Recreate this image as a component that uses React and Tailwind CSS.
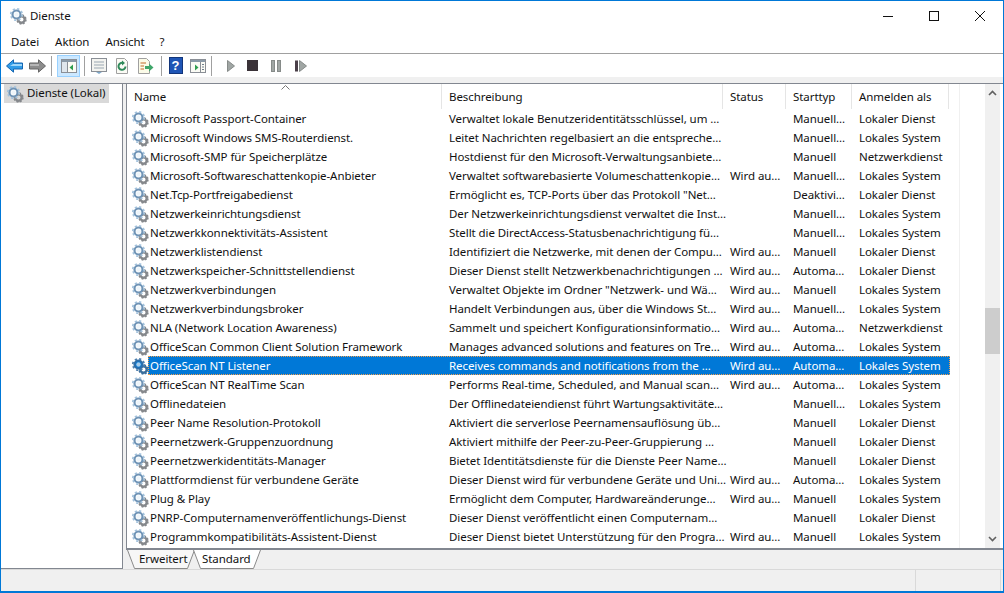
const services = [
  ['Microsoft Passport-Container', 'Verwaltet lokale Benutzeridentitätsschlüssel, um ...', '', 'Manuell...', 'Lokaler Dienst'],
  ['Microsoft Windows SMS-Routerdienst.', 'Leitet Nachrichten regelbasiert an die entspreche...', '', 'Manuell...', 'Lokales System'],
  ['Microsoft-SMP für Speicherplätze', 'Hostdienst für den Microsoft-Verwaltungsanbiete...', '', 'Manuell', 'Netzwerkdienst'],
  ['Microsoft-Softwareschattenkopie-Anbieter', 'Verwaltet softwarebasierte Volumeschattenkopie...', 'Wird au...', 'Manuell...', 'Lokales System'],
  ['Net.Tcp-Portfreigabedienst', 'Ermöglicht es, TCP-Ports über das Protokoll "Net...', '', 'Deaktivi...', 'Lokaler Dienst'],
  ['Netzwerkeinrichtungsdienst', 'Der Netzwerkeinrichtungsdienst verwaltet die Inst...', '', 'Manuell...', 'Lokales System'],
  ['Netzwerkkonnektivitäts-Assistent', 'Stellt die DirectAccess-Statusbenachrichtigung fü...', '', 'Manuell...', 'Lokales System'],
  ['Netzwerklistendienst', 'Identifiziert die Netzwerke, mit denen der Compu...', 'Wird au...', 'Manuell', 'Lokaler Dienst'],
  ['Netzwerkspeicher-Schnittstellendienst', 'Dieser Dienst stellt Netzwerkbenachrichtigungen ...', 'Wird au...', 'Automa...', 'Lokaler Dienst'],
  ['Netzwerkverbindungen', 'Verwaltet Objekte im Ordner "Netzwerk- und Wä...', 'Wird au...', 'Manuell', 'Lokales System'],
  ['Netzwerkverbindungsbroker', 'Handelt Verbindungen aus, über die Windows St...', 'Wird au...', 'Manuell...', 'Lokales System'],
  ['NLA (Network Location Awareness)', 'Sammelt und speichert Konfigurationsinformatio...', 'Wird au...', 'Automa...', 'Netzwerkdienst'],
  ['OfficeScan Common Client Solution Framework', 'Manages advanced solutions and features on Tre...', 'Wird au...', 'Automa...', 'Lokales System'],
  ['OfficeScan NT Listener', 'Receives commands and notifications from the ...', 'Wird au...', 'Automa...', 'Lokales System'],
  ['OfficeScan NT RealTime Scan', 'Performs Real-time, Scheduled, and Manual scan...', 'Wird au...', 'Automa...', 'Lokales System'],
  ['Offlinedateien', 'Der Offlinedateiendienst führt Wartungsaktivitäte...', '', 'Manuell...', 'Lokales System'],
  ['Peer Name Resolution-Protokoll', 'Aktiviert die serverlose Peernamensauflösung üb...', '', 'Manuell', 'Lokaler Dienst'],
  ['Peernetzwerk-Gruppenzuordnung', 'Aktiviert mithilfe der Peer-zu-Peer-Gruppierung ...', '', 'Manuell', 'Lokaler Dienst'],
  ['Peernetzwerkidentitäts-Manager', 'Bietet Identitätsdienste für die Dienste Peer Name...', '', 'Manuell', 'Lokaler Dienst'],
  ['Plattformdienst für verbundene Geräte', 'Dieser Dienst wird für verbundene Geräte und Uni...', 'Wird au...', 'Automa...', 'Lokales System'],
  ['Plug & Play', 'Ermöglicht dem Computer, Hardwareänderunge...', 'Wird au...', 'Manuell', 'Lokales System'],
  ['PNRP-Computernamenveröffentlichungs-Dienst', 'Dieser Dienst veröffentlicht einen Computernam...', '', 'Manuell', 'Lokaler Dienst'],
  ['Programmkompatibilitäts-Assistent-Dienst', 'Dieser Dienst bietet Unterstützung für den Progra...', 'Wird au...', 'Manuell', 'Lokales System'],
  ['', '', '', '', ''],
];

function Gear({ selected }) {
  const big = selected ? '#2f6ea8' : '#6f93b5';
  const small = selected ? '#3c6f9c' : '#85888c';
  return (
    <svg width="18" height="18" viewBox="0 0 18 18" className="shrink-0">
      <circle cx="12.5" cy="12.5" r="3.2" fill="none" stroke={small} strokeWidth="2.4" />
      <circle cx="12.5" cy="12.5" r="4.4" fill="none" stroke={small} strokeWidth="1.6" strokeDasharray="2 1.45" />
      <circle cx="7.5" cy="7.5" r="4" fill={selected ? '#0078d7' : '#ffffff'} stroke={big} strokeWidth="2.2" />
      <circle cx="7.5" cy="7.5" r="5.7" fill="none" stroke={selected ? '#4d7fae' : '#a3c2dc'} strokeWidth="1.8" strokeDasharray="2.2 2.27" />
      <circle cx="7.5" cy="7.5" r="2.2" fill={selected ? '#a9cdea' : '#eef5fa'} />
    </svg>
  );
}

function Sep() {
  return <div className="w-px h-[20px] bg-[#a0a0a0]" />;
}

function WindowIcon({ children }) {
  return (
    <svg width="16" height="16" viewBox="0 0 16 16">
      <rect x="0.5" y="1.5" width="15" height="13" fill="#fbfbf5" stroke="#8a8f96" />
      <rect x="1" y="2" width="14" height="2" fill="#8a9aa8" />
      {children}
    </svg>
  );
}

function Toolbar() {
  return (
    <div className="h-[23px] shrink-0 flex items-center pl-[2px] bg-white">
      <button className="w-[23px] h-[22px] flex items-center justify-center">
        <svg width="17" height="14" viewBox="0 0 17 14">
          <path d="M0.5 7L7.5 0.8V4H16.5V10H7.5V13.2Z" fill="#2f9be8" stroke="#1565b0" />
          <path d="M7 5H16V7H4Z" fill="#9ed6fa" />
        </svg>
      </button>
      <button className="w-[23px] h-[22px] flex items-center justify-center">
        <svg width="17" height="14" viewBox="0 0 17 14">
          <path d="M16.5 7L9.5 0.8V4H0.5V10H9.5V13.2Z" fill="#8c8c8c" stroke="#666666" />
          <path d="M1 5H10V7H1Z" fill="#b5b5b5" />
        </svg>
      </button>
      <div className="ml-[2px]"><Sep /></div>
      <button className="ml-[5px] w-[23px] h-[22px] flex items-center justify-center bg-[#cce8ff] border border-[#99d1ff]">
        <WindowIcon>
          <rect x="1" y="4" width="5" height="10" fill="#dfe6ec" />
          <path d="M6.5 4V14" stroke="#8a8f96" />
          <path d="M12 6.5L8.5 9.5L12 12.5Z" fill="#2f9e4f" />
        </WindowIcon>
      </button>
      <div className="ml-[4px]"><Sep /></div>
      <button className="ml-[2px] w-[23px] h-[22px] flex items-center justify-center">
        <svg width="16" height="16" viewBox="0 0 16 16">
          <rect x="0.5" y="0.5" width="15" height="13" fill="#f4f4f0" stroke="#8a8f96" />
          <path d="M3 4H13M3 7H13M3 10H13" stroke="#9aa7b2" />
          <path d="M5 14H11L8 16Z" fill="#7fa8c9" />
        </svg>
      </button>
      <button className="w-[23px] h-[22px] flex items-center justify-center">
        <svg width="16" height="16" viewBox="0 0 16 16">
          <path d="M2.5 0.5H10.5L13.5 3.5V15.5H2.5Z" fill="#fbfbf5" stroke="#a0a0a0" />
          <path d="M11.5 8.5A3.5 3.5 0 1 1 9 5" fill="none" stroke="#2f8a5a" strokeWidth="2" />
          <path d="M8 2.5L11 5L8 7.5Z" fill="#2f8a5a" />
        </svg>
      </button>
      <button className="ml-px w-[23px] h-[22px] flex items-center justify-center">
        <svg width="17" height="16" viewBox="0 0 17 16">
          <path d="M1.5 0.5H9.5L12.5 3.5V15.5H1.5Z" fill="#fbfbe8" stroke="#a0a0a0" />
          <path d="M3.5 5H9M3.5 8H7M3.5 11H7" stroke="#c06a2a" />
          <path d="M8 8H12V5.5L16.5 9.5L12 13.5V11H8Z" fill="#3fa66a" />
        </svg>
      </button>
      <div className="ml-[4px]"><Sep /></div>
      <button className="ml-[2px] w-[23px] h-[22px] flex items-center justify-center">
        <div className="w-[14px] h-[17px] bg-[#1f55b5] border border-[#12357a] flex items-center justify-center text-white text-[13px] font-bold leading-none font-['Liberation_Sans',sans-serif]">?</div>
      </button>
      <button className="ml-[-1px] w-[23px] h-[22px] flex items-center justify-center">
        <WindowIcon>
          <path d="M10.5 4V14" stroke="#8a8f96" />
          <path d="M5 6.5L8.5 9.5L5 12.5Z" fill="#2f9e4f" />
          <path d="M12 6.5H14M12 9H14M12 11.5H14" stroke="#6f7f8e" />
        </WindowIcon>
      </button>
      <div className="ml-[2px]"><Sep /></div>
      <button className="ml-[7px] w-[23px] h-[22px] flex items-center justify-center">
        <svg width="10" height="12" viewBox="0 0 10 12"><path d="M1.5 0.5L8.5 6L1.5 11.5Z" fill="#a0a6a4" stroke="#868b89" /></svg>
      </button>
      <button className="ml-[-1px] w-[23px] h-[22px] flex items-center justify-center">
        <div className="w-[11px] h-[11px] bg-[#3a3238]" />
      </button>
      <button className="w-[23px] h-[22px] flex items-center justify-center">
        <svg width="10" height="12" viewBox="0 0 10 12">
          <rect x="0.5" y="0.5" width="3" height="11" fill="#a0a6a4" stroke="#868b89" />
          <rect x="6.5" y="0.5" width="3" height="11" fill="#a0a6a4" stroke="#868b89" />
        </svg>
      </button>
      <button className="ml-[3px] w-[23px] h-[22px] flex items-center justify-center">
        <svg width="13" height="12" viewBox="0 0 13 12">
          <rect x="0" y="0.5" width="3" height="11" fill="#4a3f48" />
          <path d="M4.5 0.5L11.5 6L4.5 11.5Z" fill="#a0a6a4" stroke="#868b89" />
        </svg>
      </button>
    </div>
  );
}

function HeaderCell({ width, label }) {
  return (
    <div className={`${width} h-[25px] border-r border-[#e5e5e5] pl-[7px] pt-[3px]`}>{label}</div>
  );
}

function Row({ row, selected }) {
  return (
    <div className="h-[19px] shrink-0 flex items-center">
      <div className="w-[21px] pl-[4px] shrink-0"><Gear selected={selected} /></div>
      <div
        className={
          selected
            ? 'w-[802px] h-[19px] flex items-center pl-[2px] bg-[#0078d7] text-white outline-1 -outline-offset-1 outline-dotted outline-[#f0a050]'
            : 'w-[802px] h-[19px] flex items-center pl-[2px] text-[#111]'
        }
      >
        <div className="w-[299px] shrink-0 whitespace-nowrap">{row[0]}</div>
        <div className="w-[281px] shrink-0 whitespace-nowrap">{row[1]}</div>
        <div className="w-[63px] shrink-0 whitespace-nowrap">{row[2]}</div>
        <div className="w-[66px] shrink-0 whitespace-nowrap">{row[3]}</div>
        <div className="whitespace-nowrap">{row[4]}</div>
      </div>
    </div>
  );
}

function Tab({ label, active, className }) {
  return (
    <div className={`relative w-[68px] h-[19px] leading-[17px] ${className}`}>
      <svg width="68" height="19" viewBox="0 0 68 19" className="absolute inset-0">
        <path
          d="M0.5 0L7.5 18.5H60.5L67.5 0"
          fill={active ? '#ffffff' : '#f7f7f7'}
          stroke="#8a8a8a"
        />
      </svg>
      <span className="relative">{label}</span>
    </div>
  );
}

export default function App() {
  return (
    <div className="w-[1004px] h-[593px] overflow-hidden flex flex-col bg-[#f0f0f0] border border-b-2 border-[#0078d7] text-[11.5px] tracking-[-0.07px] leading-[19px] text-[#111] font-['Noto_Sans',sans-serif]">
      <div className="h-[30px] shrink-0 bg-white flex items-center pl-[8px]">
        <Gear />
        <span className="ml-[3px] mb-[2px]">Dienste</span>
        <div className="ml-auto flex">
          <div className="w-[46px] h-[29px] flex items-center justify-center">
            <div className="w-[10px] h-px bg-[#111]" />
          </div>
          <div className="w-[46px] h-[29px] flex items-center justify-center">
            <div className="w-[10px] h-[10px] border border-[#111]" />
          </div>
          <div className="w-[46px] h-[29px] flex items-center justify-center">
            <svg width="10" height="10" viewBox="0 0 10 10"><path d="M0 0L10 10M10 0L0 10" stroke="#111" /></svg>
          </div>
        </div>
      </div>
      <div className="h-[23px] shrink-0 bg-white flex items-center pl-[10px] pb-[2px] border-b border-[#a0a0a0]">
        <span>Datei</span>
        <span className="ml-[16px]">Aktion</span>
        <span className="ml-[16px]">Ansicht</span>
        <span className="ml-[15px]">?</span>
      </div>
      <Toolbar />
      <div className="h-[7px] shrink-0 bg-[#f0f0f0] border-b border-[#828790]" />
      <div className="flex-1 min-h-0 flex">
        <div className="w-[122px] h-[485px] shrink-0 bg-white border-r border-b border-[#828790] pl-[3px]">
          <div className="w-[105px] h-[19px] bg-[#d9d9d9] flex items-center pl-[2px] gap-[3px] whitespace-nowrap">
            <Gear />
            <span className="mb-[2px]">Dienste (Lokal)</span>
          </div>
        </div>
        <div className="ml-[3px] flex-1 flex flex-col min-w-0">
          <div className="h-[466px] shrink-0 flex border-l border-b-2 border-[#828790] bg-white">
            <div className="w-[833px] shrink-0 flex flex-col overflow-hidden border-r border-[#f0f0f0]">
              <div className="relative flex shrink-0 h-[25px]">
                <HeaderCell width="w-[315px]" label="Name" />
                <HeaderCell width="w-[281px]" label="Beschreibung" />
                <HeaderCell width="w-[63px]" label="Status" />
                <HeaderCell width="w-[66px]" label="Starttyp" />
                <HeaderCell width="w-[97px]" label="Anmelden als" />
                <svg width="9" height="5" viewBox="0 0 9 5" className="absolute left-[154px] top-[1px]">
                  <path d="M0.5 4.5L4.5 0.5L8.5 4.5" fill="none" stroke="#777777" />
                </svg>
              </div>
              {services.map((row, i) => (
                <Row key={i} row={row} selected={i === 13} />
              ))}
            </div>
            <div className="flex-1" />
            <div className="w-[15px] shrink-0 bg-[#f0f0f0] flex flex-col">
              <div className="h-[18px] flex items-center justify-center">
                <svg width="9" height="6" viewBox="0 0 9 6"><path d="M1 5L4.5 1.5L8 5" fill="none" stroke="#606060" strokeWidth="1.6" /></svg>
              </div>
              <div className="flex-1">
                <div className="mt-[206px] h-[46px] bg-[#cdcdcd]" />
              </div>
              <div className="h-[18px] flex items-center justify-center">
                <svg width="9" height="6" viewBox="0 0 9 6"><path d="M1 1L4.5 4.5L8 1" fill="none" stroke="#606060" strokeWidth="1.6" /></svg>
              </div>
            </div>
            <div className="w-[3px] shrink-0" />
          </div>
          <div className="flex pl-px">
            <Tab label="Erweitert" className="pl-[12px]" />
            <Tab label="Standard" active className="ml-[-2px] pl-[9px]" />
          </div>
        </div>
      </div>
      <div className="h-[22px] shrink-0 border-t border-[#d9d9d9] flex justify-end">
        <div className="w-[85px] border-l border-[#d9d9d9]" />
        <div className="w-[3px] border-l border-[#d9d9d9]" />
      </div>
    </div>
  );
}
